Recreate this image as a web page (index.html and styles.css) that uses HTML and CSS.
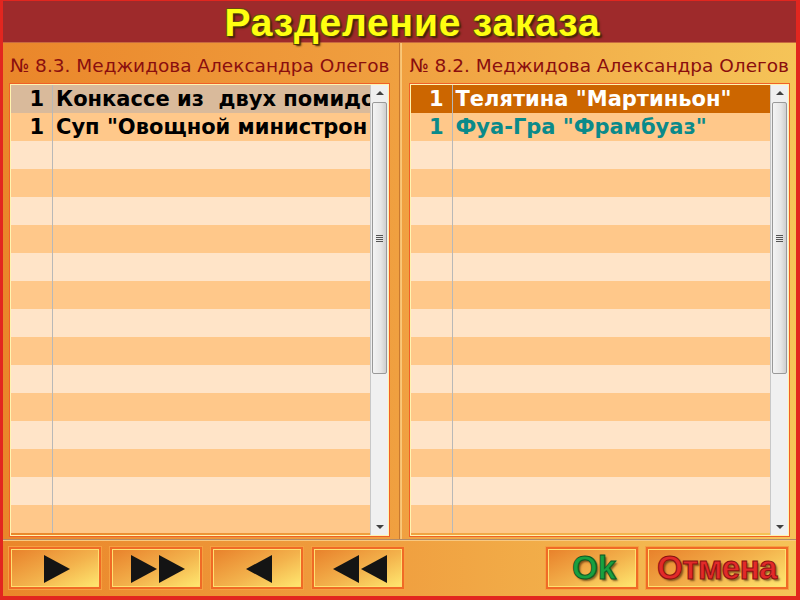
FILE: index.html
```html
<!DOCTYPE html>
<html>
<head>
<meta charset="utf-8">
<link rel="stylesheet" href="styles.css">
</head>
<body>
<div class="window">
  <div class="titlebar"><span class="title">Разделение заказа</span></div>
  <div class="panels">
    <div class="panel">
      <div class="phead">№ 8.3. Меджидова Александра Олегов</div>
      <div class="grid">
        <div class="rows">
          <div class="row sel"><span class="qty">1</span><span class="name">Конкассе из&nbsp; двух помидо</span></div>
          <div class="row odd"><span class="qty">1</span><span class="name">Суп "Овощной министрон</span></div>
          <div class="row even"><span class="qty"></span><span class="name"></span></div>
          <div class="row odd"><span class="qty"></span><span class="name"></span></div>
          <div class="row even"><span class="qty"></span><span class="name"></span></div>
          <div class="row odd"><span class="qty"></span><span class="name"></span></div>
          <div class="row even"><span class="qty"></span><span class="name"></span></div>
          <div class="row odd"><span class="qty"></span><span class="name"></span></div>
          <div class="row even"><span class="qty"></span><span class="name"></span></div>
          <div class="row odd"><span class="qty"></span><span class="name"></span></div>
          <div class="row even"><span class="qty"></span><span class="name"></span></div>
          <div class="row odd"><span class="qty"></span><span class="name"></span></div>
          <div class="row even"><span class="qty"></span><span class="name"></span></div>
          <div class="row odd"><span class="qty"></span><span class="name"></span></div>
          <div class="row even"><span class="qty"></span><span class="name"></span></div>
          <div class="row odd"><span class="qty"></span><span class="name"></span></div>
        </div>
        <div class="scroll">
          <div class="arrow up"></div>
          <div class="track"><div class="thumb"><div class="grip"></div></div></div>
          <div class="arrow down"></div>
        </div>
      </div>
    </div>
    <div class="panel">
      <div class="phead">№ 8.2. Меджидова Александра Олегов</div>
      <div class="grid">
        <div class="rows">
          <div class="row cur"><span class="qty">1</span><span class="name">Телятина "Мартиньон"</span></div>
          <div class="row odd teal"><span class="qty">1</span><span class="name">Фуа-Гра "Фрамбуаз"</span></div>
          <div class="row even"><span class="qty"></span><span class="name"></span></div>
          <div class="row odd"><span class="qty"></span><span class="name"></span></div>
          <div class="row even"><span class="qty"></span><span class="name"></span></div>
          <div class="row odd"><span class="qty"></span><span class="name"></span></div>
          <div class="row even"><span class="qty"></span><span class="name"></span></div>
          <div class="row odd"><span class="qty"></span><span class="name"></span></div>
          <div class="row even"><span class="qty"></span><span class="name"></span></div>
          <div class="row odd"><span class="qty"></span><span class="name"></span></div>
          <div class="row even"><span class="qty"></span><span class="name"></span></div>
          <div class="row odd"><span class="qty"></span><span class="name"></span></div>
          <div class="row even"><span class="qty"></span><span class="name"></span></div>
          <div class="row odd"><span class="qty"></span><span class="name"></span></div>
          <div class="row even"><span class="qty"></span><span class="name"></span></div>
          <div class="row odd"><span class="qty"></span><span class="name"></span></div>
        </div>
        <div class="scroll">
          <div class="arrow up"></div>
          <div class="track"><div class="thumb"><div class="grip"></div></div></div>
          <div class="arrow down"></div>
        </div>
      </div>
    </div>
  </div>
  <div class="bottom">
    <div class="btn"><svg width="28" height="30" viewBox="0 0 28 30"><polygon points="1,1 27,15 1,29" fill="#141414"/></svg></div>
    <div class="btn"><svg width="56" height="30" viewBox="0 0 56 30"><polygon points="1,1 27,15 1,29" fill="#141414"/><polygon points="29,1 55,15 29,29" fill="#141414"/></svg></div>
    <div class="btn"><svg width="28" height="30" viewBox="0 0 28 30"><polygon points="27,1 1,15 27,29" fill="#141414"/></svg></div>
    <div class="btn"><svg width="56" height="30" viewBox="0 0 56 30"><polygon points="27,1 1,15 27,29" fill="#141414"/><polygon points="55,1 29,15 55,29" fill="#141414"/></svg></div>
    <div class="spacer"></div>
    <div class="btn ok"><span>Ok</span></div>
    <div class="btn cancel"><span>Отмена</span></div>
  </div>
</div>
</body>
</html>
```

FILE: styles.css
```css
html, body {
  margin: 0;
  padding: 0;
  width: 800px;
  height: 600px;
  overflow: hidden;
}
.window {
  width: 800px;
  height: 600px;
  box-sizing: border-box;
  border-left: 3px solid #e2261f;
  border-right: 4px solid #e2261f;
  border-bottom: 4px solid #e2261f;
  border-top: 1px solid #e2261f;
  display: flex;
  flex-direction: column;
  background: linear-gradient(90deg, #ea862a 0%, #f0a040 50%, #f5c458 100%);
  font-family: "DejaVu Sans", sans-serif;
}
.titlebar {
  height: 41px;
  background: #9e2a2b;
  display: flex;
  justify-content: center;
  align-items: center;
  border-bottom: 1px solid #c86a40;
  padding-left: 26px;
}
.title {
  font-family: "Liberation Sans", Arial, sans-serif;
  font-weight: bold;
  font-size: 39px;
  line-height: 40px;
  color: #ffff10;
  letter-spacing: 0.8px;
  margin-top: 2px;
  text-shadow: 1px 1px 0 #4a3010, -1px -1px 0 #6a4a10, 1px -1px 0 #6a4a10, -1px 1px 0 #6a4a10, 2px 2px 2px #3a2000;
}
.panels {
  display: flex;
  height: 496px;
}
.panel {
  flex: 1;
  display: flex;
  flex-direction: column;
  padding: 0 6px 0 6px;
  border-right: 1px solid #f7c070;
  box-shadow: inset -1px 0 0 #c87830;
}
.panel + .panel {
  border-right: none;
  box-shadow: inset 1px 0 0 #f9c878;
  padding-left: 8px;
  padding-right: 3px;
}
.phead {
  height: 40px;
  line-height: 46px;
  font-size: 18.5px;
  color: #8a0e0e;
  white-space: nowrap;
  overflow: hidden;
  padding-left: 1px;
}
.grid {
  display: flex;
  height: 450px;
  border: 1px solid #f06028;
  box-shadow: inset 0 0 0 1px #fff4b0;
  padding: 1px;
  width: 377px;
}
.rows {
  flex: 1;
  display: flex;
  flex-direction: column;
  overflow: hidden;
}
.row {
  height: 28px;
  flex: none;
  display: flex;
  font-weight: bold;
  font-size: 21px;
  line-height: 29px;
  color: #000;
  white-space: nowrap;
}
.row.odd { background: #ffc88a; }
.row.even { background: #ffe4c8; }
.row.sel { background: #d9ba9b; }
.row.cur { background: #cc6600; color: #fff; }
.row.teal { color: #0a8a8a; }
.qty {
  width: 42px;
  flex: none;
  text-align: right;
  padding-right: 8px;
  box-sizing: border-box;
  border-right: 1px solid #b8b8b8;
}
.name {
  padding-left: 3px;
  overflow: hidden;
}
.scroll {
  width: 17px;
  flex: none;
  display: flex;
  flex-direction: column;
  background: #f0f0f0;
  border-left: 1px solid #c8c8c8;
}
.arrow {
  height: 17px;
  position: relative;
}
.arrow::after {
  content: "";
  position: absolute;
  left: 5px;
  border-left: 4px solid transparent;
  border-right: 4px solid transparent;
}
.arrow.up::after { top: 6px; border-bottom: 4px solid #404040; }
.arrow.down::after { top: 7px; border-top: 4px solid #404040; }
.track {
  flex: 1;
  padding: 0 1px;
}
.thumb {
  height: 272px;
  box-sizing: border-box;
  border: 1px solid #999;
  border-radius: 2px;
  background: linear-gradient(90deg, #f4f4f4 0%, #e6e6e6 60%, #cfcfcf 100%);
  display: flex;
  align-items: center;
  justify-content: center;
}
.grip {
  width: 7px;
  height: 7px;
  background: repeating-linear-gradient(180deg, #555 0 1px, transparent 1px 2px);
}
.bottom {
  flex: 1;
  display: flex;
  align-items: center;
  padding: 0 8px 0 6px;
  gap: 9px;
  border-top: 1px solid #b08a68;
  box-shadow: inset 0 1px 0 #f8c880;
}
.spacer { flex: 1; }
.btn {
  width: 92px;
  height: 42px;
  box-sizing: border-box;
  border: 2px solid #f06a26;
  box-shadow: inset 0 0 0 1px #ffe070, 0 0 0 1px #f6a040;
  background: linear-gradient(155deg, #e8802a 0%, #f3b24c 55%, #ffe870 100%);
  display: flex;
  align-items: center;
  justify-content: center;
  font-family: "Liberation Sans", Arial, sans-serif;
  font-weight: bold;
  font-size: 33px;
}
.btn svg { margin-left: 4px; margin-top: 2px; }
.btn.cancel { width: 142px; margin-left: -1px; }
.ok span {
  color: #18a040;
  margin-left: 4px;
  -webkit-text-stroke: 1px #0e5a24;
  text-shadow: 2px 2px 2px rgba(60,30,0,0.6);
}
.cancel span {
  color: #e22a2a;
  letter-spacing: -0.5px;
  -webkit-text-stroke: 1px #8a1010;
  text-shadow: 2px 2px 2px rgba(60,30,0,0.6);
}
```
